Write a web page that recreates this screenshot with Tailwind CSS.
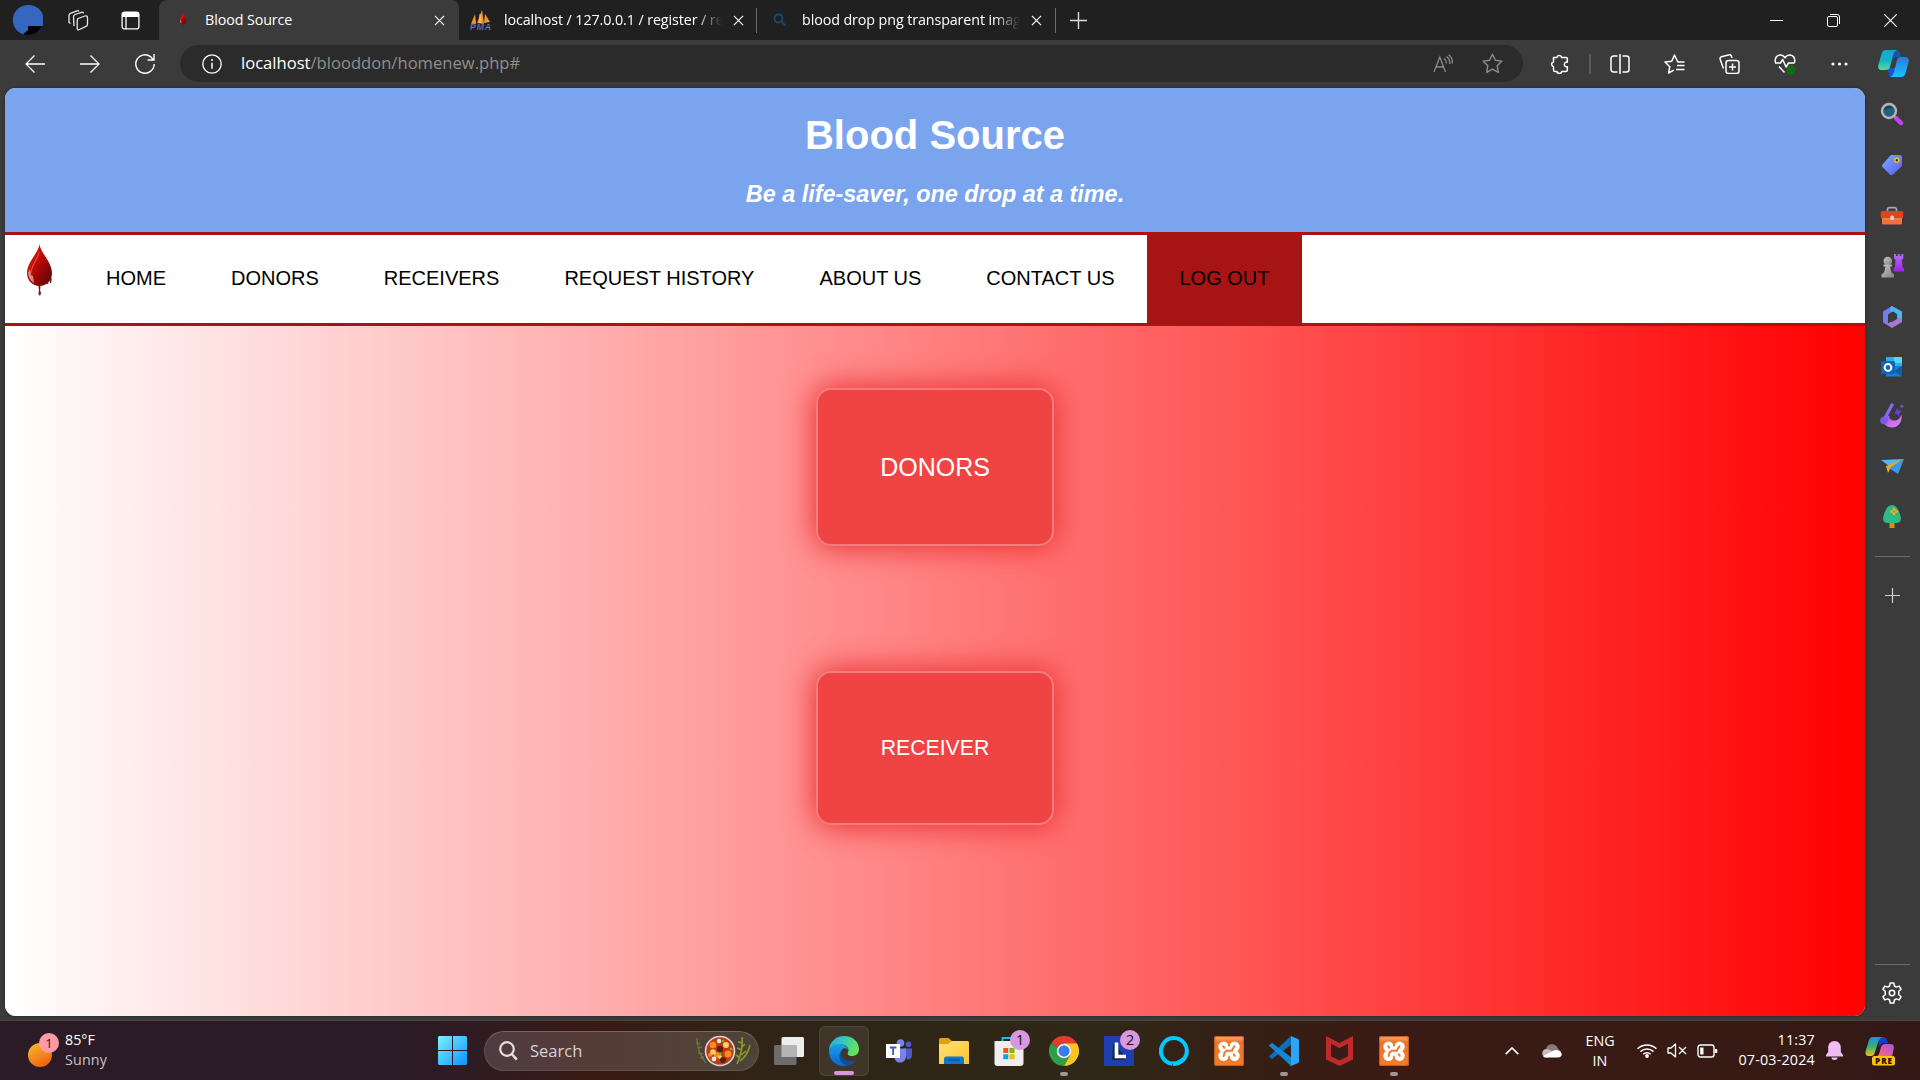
<!DOCTYPE html>
<html lang="en">
<head>
<meta charset="utf-8">
<title>Blood Source</title>
<script src="https://cdn.jsdelivr.net/npm/@tailwindcss/browser@4"></script>
</head>
<body class="w-[1920px] h-[1080px] overflow-hidden bg-[#3b3b3b] flex flex-col font-['Open_Sans',sans-serif] text-white">

<!-- Shared symbols -->
<svg class="absolute size-0">
  <defs>
    <linearGradient id="drop" x1="0" y1="0" x2="1" y2="1"><stop offset="0" stop-color="#f0280c"/><stop offset=".5" stop-color="#b00606"/><stop offset="1" stop-color="#4a0808"/></linearGradient>
    <linearGradient id="cpA" x1="0" y1="0" x2="0" y2="1"><stop offset="0" stop-color="#10a5e0"/><stop offset=".5" stop-color="#12b5c0"/><stop offset="1" stop-color="#5ad89a"/></linearGradient>
    <linearGradient id="cpB" x1="0" y1="0" x2="0" y2="1"><stop offset="0" stop-color="#2a78e0"/><stop offset="1" stop-color="#1cc0fa"/></linearGradient>
    <linearGradient id="win" x1="0" y1="0" x2="29" y2="29" gradientUnits="userSpaceOnUse"><stop offset="0" stop-color="#7df0ff"/><stop offset="1" stop-color="#0a94ff"/></linearGradient>
    <linearGradient id="sun" x1="0" y1="0" x2=".6" y2="1"><stop offset="0" stop-color="#f5c030"/><stop offset="1" stop-color="#f06410"/></linearGradient>
    <linearGradient id="tag" x1="0" y1="0" x2="1" y2="1"><stop offset="0" stop-color="#7fb0ff"/><stop offset="1" stop-color="#5558f0"/></linearGradient>
    <linearGradient id="purp" x1="0" y1="0" x2="0" y2="1"><stop offset="0" stop-color="#b070f0"/><stop offset="1" stop-color="#a020f0"/></linearGradient>
    <linearGradient id="pink" x1="0" y1="0" x2="1" y2="1"><stop offset="0" stop-color="#7a50e8"/><stop offset=".6" stop-color="#d070f0"/><stop offset="1" stop-color="#e080f0"/></linearGradient>
    <linearGradient id="gry" x1="0" y1="0" x2="1" y2="1"><stop offset="0" stop-color="#c8c8c8"/><stop offset="1" stop-color="#808080"/></linearGradient>
    <linearGradient id="fold" x1="0" y1="0" x2="1" y2="1"><stop offset="0" stop-color="#ffe07a"/><stop offset="1" stop-color="#fcc52c"/></linearGradient>
    <linearGradient id="edgeT" x1="0" y1="0" x2="1" y2=".3"><stop offset="0" stop-color="#2aa8dc"/><stop offset=".5" stop-color="#34c8c0"/><stop offset="1" stop-color="#62e35a"/></linearGradient>
    <linearGradient id="edgeB" x1="0" y1="0" x2="0" y2="1"><stop offset="0" stop-color="#1ba0e8"/><stop offset="1" stop-color="#0a66c8"/></linearGradient>
    <linearGradient id="pcA" x1="0" y1="0" x2="0" y2="1"><stop offset="0" stop-color="#1d8cf0"/><stop offset=".5" stop-color="#35b26e"/><stop offset="1" stop-color="#f0c020"/></linearGradient>
    <linearGradient id="pcB" x1="1" y1="0" x2="0" y2="1"><stop offset="0" stop-color="#9b58e8"/><stop offset=".5" stop-color="#e05aa8"/><stop offset="1" stop-color="#ff7a5a"/></linearGradient>
    <linearGradient id="xam" x1="0" y1="0" x2="0" y2="1"><stop offset="0" stop-color="#ffa868"/><stop offset=".12" stop-color="#f09058"/><stop offset=".2" stop-color="#e8762c"/><stop offset="1" stop-color="#f87c28"/></linearGradient>
    <symbol id="close" viewBox="0 0 12 12"><path d="M1 1l10 10M11 1L1 11" stroke="#fff" stroke-width="1.3" fill="none"/></symbol>
    <symbol id="blood" viewBox="0 0 26 52"><path d="M13 0c1 9 12.500 18 12.500 29 0 7.500-5.500 13-12.500 13S.5 36.500.5 29C.5 18 12 9 13 0z" fill="url(#drop)"/><path d="M12.500 8c-1 8-8 13-8 21" stroke="#ff6a50" stroke-width="1.200" fill="none" opacity=".6"/><path d="M1.500 29c1 6 3 8 6 10l-1-7-2-1-1-6z" fill="#e0b0a4" opacity=".8"/><path d="M24.500 34c0 2-.5 3-.5 5m-3-2v3" stroke="#7a1010" stroke-width="1.500" fill="none"/><path d="M12 42h2l-.5 5h-1z" fill="#701010"/><ellipse cx="13.200" cy="49" rx="1.200" ry="2.500" fill="#7c1818"/></symbol>
    <symbol id="xampp" viewBox="0 0 30 30"><rect width="30" height="30" rx="2.500" fill="url(#xam)"/><rect x=".6" y=".6" width="28.800" height="28.800" rx="2" fill="none" stroke="#c05c1c" stroke-width="1"/><g fill="#fff"><circle cx="9.500" cy="10.700" r="5.200"/><circle cx="20.500" cy="10.700" r="5.200"/><circle cx="9.500" cy="19.800" r="5.200"/><circle cx="20.500" cy="19.800" r="5.200"/><rect x="8" y="11" width="14" height="8.500"/></g><path d="M15 5.500v4.500M15 25v-4.500" stroke="#f07a2c" stroke-width="2"/><g fill="none" stroke="#f07a2c" stroke-width="2" stroke-linecap="round"><path d="M9.300 10.200l1 1.500M20.500 10.300l-2 3-.5 1.500h-5.500l-2 2-.8 3.200M20.700 19.800l-1-1.500"/></g></symbol>
  </defs>
</svg>

<!-- Tab strip -->
<div class="h-10 bg-[#202020] flex items-center shrink-0 text-[14.300px]">
  <div class="w-[50px] ml-[3px] flex justify-center">
    <svg width="30" height="30" viewBox="0 0 30 30"><circle cx="15" cy="15" r="15" fill="#000"/><path d="M15 0a15 15 0 0 1 14.500 21H15v4l-5 4.200A15 15 0 0 1 15 0z" fill="#3567c0"/></svg>
  </div>
  <div class="w-[50px] flex justify-center">
    <svg width="22" height="22" viewBox="0 0 22 22" fill="none" stroke="#e8e8e8" stroke-width="1.300" stroke-linejoin="round"><path d="M11 9.500l7-2.500c1.500-.5 2.500 0 2.500 1.500v6.500c0 1-.5 2-1.500 2.300l-6.500 3.200c-1.500.7-2.300 0-2.300-1.300v-7c0-1.200.2-2.200.8-2.700z"/><path d="M7 17l-.5-9c0-1 .5-2 1.500-2.500l6.500-2.200c1-.3 2 .2 2 1.200"/><path d="M3.500 14.500L2 13.500V6.500c0-1 .5-1.800 1.500-2.200l6.500-2.500c1-.3 1.800 0 2 .7"/></svg>
  </div>
  <div class="w-14 flex justify-center pr-0.5">
    <svg width="19" height="19" viewBox="0 0 19 19"><rect x="1.100" y="1.100" width="16.800" height="16.800" rx="2.500" fill="none" stroke="#fff" stroke-width="1.300"/><path d="M1 3.500A2.500 2.500 0 0 1 3.500 1h12A2.500 2.500 0 0 1 18 3.500V6H1z" fill="#fff"/><path d="M5 6v12" stroke="#fff" stroke-width="1.300"/></svg>
  </div>
  <div class="w-[300px] h-10 bg-[#3b3b3b] rounded-t-lg flex items-center pl-4 pr-[14px]">
    <svg width="16" height="14" class="mr-[14px]"><use href="#blood"/></svg>
    <span class="grow whitespace-nowrap tracking-[-0.1px]">Blood Source</span>
    <svg width="11" height="11"><use href="#close"/></svg>
  </div>
  <div class="w-[298px] flex items-center pl-[11px] border-r border-[#6a6a6a] h-[25px]">
    <svg width="22" height="21" viewBox="0 0 22 21" class="mr-3"><path d="M5 4L1 14h5zM12 0L7 13l7 1zM15 4l-1 9 6-1z" fill="#f0982c"/><path d="M10 4v9" stroke="#ffd090"/><text x="0" y="20" font-family="Liberation Sans" font-weight="bold" font-style="italic" font-size="8.500" textLength="21" fill="#8c94c8" stroke="#222a60" stroke-width=".4">PMA</text></svg>
    <span class="w-[218px] overflow-hidden whitespace-nowrap tracking-[-0.1px] [mask-image:linear-gradient(to_right,#000_88%,transparent)]">localhost / 127.0.0.1 / register / re</span>
    <svg width="11" height="11" class="ml-[11px]"><use href="#close"/></svg>
  </div>
  <div class="w-[299px] flex items-center pl-[16px] border-r border-[#6a6a6a] h-[25px]">
    <svg width="14" height="14" viewBox="0 0 14 14" class="mr-[15px]" fill="none" stroke="#1c4a72" stroke-width="1.800"><circle cx="5.500" cy="5.500" r="4"/><path d="M8.500 8.500l4 4.200"/></svg>
    <span class="w-[218px] overflow-hidden whitespace-nowrap tracking-[-0.1px] [mask-image:linear-gradient(to_right,#000_88%,transparent)]">blood drop png transparent imag</span>
    <svg width="11" height="11" class="ml-[11px]"><use href="#close"/></svg>
  </div>
  <div class="w-[45px] flex justify-center"><svg width="17" height="17" viewBox="0 0 17 17"><path d="M8.500 0v17M0 8.500h17" stroke="#ddd" stroke-width="1.400"/></svg></div>
  <div class="ml-auto mr-px flex">
    <div class="w-[57px] flex justify-center items-center"><svg width="13" height="13" viewBox="0 0 13 13"><path d="M0 6.500h13" stroke="#fff"/></svg></div>
    <div class="w-[57px] flex justify-center items-center"><svg width="13" height="13" viewBox="0 0 13 13" fill="none" stroke="#fff"><rect x=".5" y="2.500" width="10" height="10" rx="1.500"/><path d="M3 .5h7a2.500 2.500 0 0 1 2.500 2.500v7"/></svg></div>
    <div class="w-[57px] flex justify-center items-center"><svg width="13" height="13" viewBox="0 0 13 13"><path d="M.3 .3l12.400 12.400M12.700 .3L.3 12.700" stroke="#fff" stroke-width="1.100"/></svg></div>
  </div>
</div>

<!-- Address bar -->
<div class="h-12 flex items-center shrink-0 pl-[7px] pb-px">
  <div class="w-[55px] flex justify-center"><svg width="20" height="18" viewBox="0 0 20 18" fill="none" stroke="#fff" stroke-width="1.300"><path d="M20 9H1M9.500 .5L1 9l8.500 8.500"/></svg></div>
  <div class="w-[55px] flex justify-center"><svg width="20" height="18" viewBox="0 0 20 18" fill="none" stroke="#fff" stroke-width="1.300"><path d="M0 9h19M10.500 .5L19 9l-8.500 8.500"/></svg></div>
  <div class="w-[55px] flex justify-center"><svg width="20" height="20" viewBox="0 0 20 20" fill="none" stroke="#fff" stroke-width="1.400"><path d="M19.200 10A9.200 9.200 0 1 1 15.500 2.600L18 5.500M19 0v6h-6.500"/></svg></div>
  <div class="w-[1343px] h-[37px] ml-2 rounded-full bg-[#2b2b2b] flex items-center pl-[22px]">
    <svg width="20" height="20" viewBox="0 0 20 20" fill="none" stroke="#fff" stroke-width="1.300"><circle cx="10" cy="10" r="9.200"/><path d="M10 8.800v6" stroke-width="1.500"/><circle cx="10" cy="6" r="1" fill="#fff" stroke="none"/></svg>
    <span class="ml-[19px] text-[16.600px] whitespace-nowrap text-[#8f8f8f] grow"><span class="text-white">localhost</span>/blooddon/homenew.php#</span>
    <svg width="20" height="20" viewBox="0 0 20 20" fill="none" stroke="#8c8c8c" stroke-width="1.300"><path d="M1 18L6.800 3 12.500 18M3 13h7.600M11 4.500c1.800 1.200 2.500 2.800 2.400 5M13.500 2.500c2.600 1.800 3.600 4.200 3.200 7.500M15.500 .7c3 2 4.200 5 3.700 8.800"/></svg>
    <svg width="21" height="21" viewBox="0 0 21 21" class="ml-[29px] mr-5" fill="none" stroke="#8c8c8c" stroke-width="1.400" stroke-linejoin="round"><path d="M10.500 1.200l2.900 6 6.500.9-4.700 4.600 1.100 6.600-5.800-3.100-5.800 3.100 1.100-6.600L1.100 8.100l6.500-.9z"/></svg>
  </div>
  <div class="w-[55px] ml-[9px] flex justify-center pr-0.5"><svg width="20" height="20" viewBox="0 0 20 20" fill="none" stroke="#fff" stroke-width="1.500" stroke-linejoin="round"><path d="M4.500 3.500h3.300a2.500 2.500 0 0 1 4.900 0H17a1.300 1.300 0 0 1 1.300 1.300V8.200h-1.300a2.400 2.400 0 0 0 0 4.600h1.300V16a1.500 1.500 0 0 1-1.500 1.500h-4a2.500 2.500 0 0 1-4.900 0H6A1.500 1.500 0 0 1 4.500 16v-3.300a2.400 2.400 0 0 1 0-4.700z"/></svg></div>
  <div class="w-[2px] h-5 bg-[#5c5c5c] ml-[2px] mr-px"></div>
  <div class="w-[55px] flex justify-center"><svg width="20" height="20" viewBox="0 0 20 20" fill="none" stroke="#fff" stroke-width="1.500"><path d="M7.500 2H3.500A2.500 2.500 0 0 0 1 4.500v11A2.500 2.500 0 0 0 3.500 18h4M12.500 2h4A2.500 2.500 0 0 1 19 4.500v11a2.500 2.500 0 0 1-2.500 2.500h-4M10 0v20"/></svg></div>
  <div class="w-[55px] flex justify-center"><svg width="21" height="20" viewBox="0 0 21 20" fill="none" stroke="#fff" stroke-width="1.500" stroke-linejoin="round"><path d="M20.500 8h-6.700L10.500 1 7.700 7.200 1 8l4.800 4.700L4.600 19l5.300-2.800M13 11.500h7.500M12 15.500h8.500"/></svg></div>
  <div class="w-[55px] flex justify-center"><svg width="21" height="20" viewBox="0 0 21 20" fill="none" stroke="#fff" stroke-width="1.500" stroke-linejoin="round"><rect x="7" y="6.500" width="13" height="13" rx="2.500"/><path d="M13.500 9.500v7M10 13h7M4.500 14.500L1.200 5.500c-.4-1.200 0-2.300 1.200-2.800L9.500.9c1.300-.4 2.500.1 2.900 1.300l.6 1.800"/></svg></div>
  <div class="w-[55px] flex justify-center"><svg width="22" height="22" viewBox="0 0 22 22" fill="none" stroke="#fff" stroke-width="1.500" stroke-linejoin="round"><path d="M1.500 9.500C.5 5.500 2.500 2 6 2c2.200 0 3.800 1 5 2.800C12.200 3 13.800 2 16 2c3.500 0 5.500 3.500 4.500 7.500M1 10h5.500L8.700 6.500 12 14l2.500-4h6M5 13.500l5.500 6"/><circle cx="16.800" cy="17.200" r="4.600" fill="#0f700f" stroke="none"/><path d="M14.600 17.300l1.500 1.500 3-3" stroke="#2a4a2a" stroke-width="1"/></svg></div>
  <div class="w-[55px] flex justify-center"><svg width="17" height="4" viewBox="0 0 17 4" fill="#fff"><circle cx="2" cy="2" r="1.600"/><circle cx="8.500" cy="2" r="1.600"/><circle cx="15" cy="2" r="1.600"/></svg></div>
  <div class="w-[53px] flex justify-center"><svg width="31" height="27" viewBox="0 0 31 27"><path d="M16 0h2c3 0 4 2 5 7h-6l-4 6z" fill="#0d5aa8"/><path d="M9 18l3 9h4l2-9z" fill="#1a50d8"/><path d="M8 0h11c-3 1-4 4-5 9l-2 8c-.8 2-2 3-4 3H4c-3 0-4.500-2-3.600-5L3.500 4C4.200 1.500 5.500 0 8 0z" fill="url(#cpA)"/><path d="M22 7h5c3 0 4.500 2 3.600 5l-3 11c-.8 2.500-2 4-4.600 4H12c3-1 3.800-4 5-9l2-8c.6-2 1.500-3 3-3z" fill="url(#cpB)"/></svg></div>
</div>

<!-- Viewport and sidebar -->
<div class="flex h-[928px] shrink-0">
  <main class="w-[1860px] h-[928px] ml-[5px] rounded-[11px] overflow-hidden bg-white shadow-[0_0_3px_#222] font-['Liberation_Sans',Arial,sans-serif] flex flex-col">
    <header class="h-36 bg-[#7ba4ee] flex flex-col items-center pt-[24px] font-bold">
      <h1 class="text-[40px] leading-[46px]">Blood Source</h1>
      <h3 class="text-[23.400px] leading-[27px] mt-[23px] italic">Be a life-saver, one drop at a time.</h3>
    </header>
    <nav class="h-[94px] border-y-[3px] border-[#a61414] flex text-black text-[20px]">
      <svg width="27" height="52" class="ml-[21px] mt-[9px] mr-[20.500px]"><use href="#blood"/></svg>
      <a class="px-[32.500px] pt-[32px] leading-[23px]">HOME</a>
      <a class="px-[32.500px] pt-[32px] leading-[23px]">DONORS</a>
      <a class="px-[32.500px] pt-[32px] leading-[23px]">RECEIVERS</a>
      <a class="px-[32.500px] pt-[32px] leading-[23px]">REQUEST HISTORY</a>
      <a class="px-[32.500px] pt-[32px] leading-[23px]">ABOUT US</a>
      <a class="px-[32.500px] pt-[32px] leading-[23px]">CONTACT US</a>
      <a class="px-[32.500px] pt-[32px] leading-[23px] bg-[#a61414]">LOG OUT</a>
    </nav>
    <section class="grow bg-linear-to-r/srgb from-white to-[#ff0000] flex flex-col items-center pt-[62px]">
      <button class="w-[238px] h-[158px] rounded-[15px] bg-[#f04444] border-2 border-[#f47c7c] shadow-[0_0_30px_2px_#ea3030] text-[25px] leading-[28px]">DONORS</button>
      <button class="w-[238px] h-[154px] mt-[125px] rounded-[15px] bg-[#f04444] border-2 border-[#f47c7c] shadow-[0_0_30px_2px_#ea3030] text-[21.250px] leading-[24px]">RECEIVER</button>
    </section>
  </main>

  <aside class="w-[55px] flex flex-col items-center pr-px">
    <div class="h-[51px] flex items-center"><svg width="24" height="24" viewBox="0 0 24 24"><path d="M14.500 14.500l2.500 2.500" stroke="#aaa" stroke-width="2.500"/><path d="M16.500 16.500l4.500 4.500" stroke="#c840f0" stroke-width="4.500" stroke-linecap="round"/><circle cx="9" cy="9" r="7" fill="#256080" stroke="#b4b4b4" stroke-width="2.400"/><path d="M5 8a4.500 4.500 0 0 1 7-2" stroke="#1a3c50" stroke-width="2" fill="none"/></svg></div>
    <div class="h-[51px] flex items-center"><svg width="22" height="22" viewBox="0 0 22 22"><path d="M11 1h8a2 2 0 0 1 2 2v8c0 1-.3 1.500-1 2l-8 7.500c-1 .9-2 .9-3 0L1.500 13c-.8-.9-.8-1.600 0-2.500L9 2c.6-.7 1-1 2-1z" fill="url(#tag)"/><circle cx="15.800" cy="6.300" r="2" fill="#30343c" stroke="#f0c818" stroke-width="1.500"/></svg></div>
    <div class="h-[51px] flex items-center"><svg width="24" height="20" viewBox="0 0 24 20"><path d="M7.500 5V3.500A1.800 1.800 0 0 1 9.300 1.700h5.400a1.800 1.800 0 0 1 1.800 1.800V5" fill="none" stroke="#a8a8a8" stroke-width="1.700"/><path d="M2 10h20v7a1.500 1.500 0 0 1-1.500 1.500h-17A1.500 1.500 0 0 1 2 17z" fill="#f0713c"/><rect x=".7" y="5" width="22.600" height="7" rx="1.500" fill="#d8481c"/><path d="M2 13h20" stroke="#f88a5c"/><rect x="10.300" y="9.500" width="3.600" height="4.500" rx="1.500" fill="#c8dce0"/></svg></div>
    <div class="h-[49px] flex items-center"><svg width="24" height="24" viewBox="0 0 24 24"><path d="M14 0h2v2h1.700V0h2v2h1.600V0h2v4.500l-1.500 1.500.7 7 1.500 2v2.500H13.500V15l1.300-2 .8-7L14 4.500z" fill="url(#purp)"/><g fill="url(#gry)"><circle cx="7.800" cy="7" r="4.300"/><path d="M3.500 10.500h8.600v2h-2l1.300 6 2.600 2v3H1.500v-3l2.600-2 1.400-6h-2z"/></g></svg></div>
    <div class="h-[53px] flex items-center"><svg width="22" height="24" viewBox="0 0 22 24"><path d="M11 1L2 6.500v10.800l5 2.700V9.500l8-5z" fill="#6f7ff0"/><path d="M11 1l10 5.500V16l-5-3.500V10L9.500 6.200V2z" fill="#4ab8f0"/><path d="M2 17.300L11 23l10-6v-3l-4.500-1.500L7 18.500z" fill="#a878d8"/><path d="M8 9l4-2.400L16 9v5l-5 3-4-2.400z" fill="#383b3e"/></svg></div>
    <div class="h-[47px] flex items-center"><svg width="22" height="22" viewBox="0 0 22 22"><path d="M5 1h16v12H5z" fill="#28b4ea"/><path d="M13 1h8v6h-8z" fill="#50d8ff"/><path d="M5 10h16v10.500H5z" fill="#1482d0"/><path d="M21 10l-8 5.500 8 5z" fill="#0a60a8"/><rect y="5" width="14" height="13" rx="1.200" fill="#0f64b8"/><circle cx="7" cy="11.500" r="3.400" fill="none" stroke="#fff" stroke-width="2"/></svg></div>
    <div class="h-[51px] flex items-center"><svg width="24" height="25" viewBox="0 0 24 25"><path d="M3 15c-1 6 4 9.500 9 9.500 6.500 0 10.500-5.500 9.500-13-2 5-4.500 6.500-8 6-3.500-.5-4.500-2.500-4-5z" fill="url(#pink)"/><path d="M12 2L5 15" stroke="#8a68f0" stroke-width="3.200" stroke-linecap="round"/><circle cx="4" cy="17.500" r="3.800" fill="#8058e8"/><path d="M17 5l1.500 2.500L22 8l-2.500 2-.5 3.500-2-2.500-3-.5L16 8z" fill="#7038e8"/><path d="M22 1l.6 1.600 1.400.6-1.500.8-.5 1.600-.8-1.600-1.400-.6 1.500-.8z" fill="#8a50f0"/></svg></div>
    <div class="h-[49px] flex items-center"><svg width="23" height="16" viewBox="0 0 23 16"><path d="M0 2L23 1 8 8z" fill="#50b8f0"/><path d="M23 1L5 8l2 7 2.500-5z" fill="#f0a818"/><path d="M23 1L8.500 10.500 17 16z" fill="#3898f0"/></svg></div>
    <div class="h-[53px] flex items-center"><svg width="20" height="23" viewBox="0 0 20 23"><rect x="7.500" y="16" width="5" height="7" fill="#e08a10"/><path d="M10 0c4 0 6 4 7.500 8 1.500 3.500 3 10-2.500 10H5C-.5 18 1 11.500 2.500 8 4 4 6 0 10 0z" fill="#30b888"/><path d="M12 4v5M9.500 6.500h5" stroke="#f0b020" stroke-width="2.600" stroke-linecap="round"/><circle cx="12" cy="6.500" r="1" fill="#d07008"/></svg></div>
    <div class="w-[35px] h-px bg-[#6c6c6c] mt-[13px]"></div>
    <svg width="15" height="15" viewBox="0 0 15 15" class="mt-[31px] shrink-0"><path d="M7.500 0v15M0 7.500h15" stroke="#d0d0d0" stroke-width="1.200"/></svg>
    <div class="w-[35px] h-px bg-[#6c6c6c] mt-auto"></div>
    <svg width="22" height="22" viewBox="0 0 22 22" class="mt-[17px] mb-[12px] shrink-0" fill="none" stroke="#fff" stroke-width="1.500" stroke-linejoin="round"><circle cx="11" cy="11" r="2.700"/><path d="M9.200 1h3.600l.6 3 1.900 1.100 2.900-1 1.900 3.200-2.300 2v3.400l2.300 2-1.900 3.200-2.900-1-1.900 1.100-.6 3H9.200l-.6-3-1.900-1.100-2.900 1-1.900-3.200 2.300-2V9.300l-2.300-2 1.900-3.200 2.900 1L8.600 4z"/></svg>
  </aside>
</div>
<div class="h-1 shrink-0"></div>

<!-- Taskbar -->
<footer class="h-[60px] shrink-0 border-t border-[#4a4340] bg-[linear-gradient(90deg,#2a1b27_0%,#2a1b26_20%,#301b22_25%,#391b14_31%,#2f2417_40%,#2f2717_58%,#352016_64%,#3a1a14_72%,#381a14_90%,#331816_100%)] flex items-center text-[14.300px] leading-5">
  <div class="relative w-[31px] h-[35px] ml-[28px] -mt-px">
    <svg width="24" height="24" class="mt-[10px]"><circle cx="12" cy="12" r="12" fill="url(#sun)"/></svg>
    <span class="absolute left-[11px] top-0 size-5 rounded-full bg-[#ff9aa5] text-[#301418] text-[13px] leading-5 text-center">1</span>
  </div>
  <div class="ml-[5px] w-[374px] -mt-px pl-px"><div>85°F</div><div class="text-[#c8c0c6] tracking-[0.15px]">Sunny</div></div>
  <svg width="29" height="29" viewBox="0 0 29 29" fill="url(#win)"><path d="M1 0h13v14H0V1zM15 0h13l1 1v13H15zM0 15h14v14H1l-1-1zM15 15h14v13l-1 1H15z"/></svg>
  <div class="w-[275px] h-10 ml-[17px] rounded-full border border-white/10 border-t-white/20 bg-white/15 flex items-center pl-[14px] pr-[7px]">
    <svg width="19" height="20" viewBox="0 0 19 20" fill="none" stroke="#e4e0e0" stroke-width="2.200"><circle cx="8" cy="8" r="6.800"/><path d="M12.800 13l5 5.600" stroke-width="2.600"/></svg>
    <span class="ml-[12px] text-[16.500px] text-[#d8d2d2] grow">Search</span>
    <svg width="56" height="32" viewBox="0 0 56 32"><g fill="none" stroke="#6a7440" stroke-width="1.400"><path d="M2 3c0 9 3 18 9 25M1 8l4 1M3 13l4-1M3 18l5 1M5 23l4-1"/></g><g fill="none" stroke="#8a9a28" stroke-width="1.600"><path d="M47 2c1 9-1 18-5 27M43 7l5 1M50 9l-3 3M42 13l5 2M51 16l-5 4M55 10c-2 9-6 13-10 16M41 20l4 3"/></g><circle cx="25" cy="16" r="14.500" fill="#c03c10" stroke="#d8d8dc" stroke-width="1.600"/><g fill="#f88a20"><circle cx="18" cy="10" r="3.300"/><circle cx="33" cy="19" r="3.500"/><circle cx="22" cy="20" r="3"/><circle cx="15" cy="20" r="2"/></g><g fill="#f8d070"><circle cx="31" cy="10" r="3"/><circle cx="18" cy="17" r="2.800"/><circle cx="25" cy="22" r="2"/></g><g fill="#5a200c"><circle cx="25" cy="14" r="3.200"/><circle cx="28" cy="25" r="3"/></g><g fill="#f0e8e0"><circle cx="24" cy="6" r="2.200"/><circle cx="19" cy="24" r="2.400"/></g><g fill="#80b020"><circle cx="28" cy="6" r="1.300"/><circle cx="25" cy="19" r="1.500"/><circle cx="36" cy="14" r="1.300"/></g></svg>
  </div>
  <div class="ml-[5px] flex">
    <div class="w-[50px] h-[50px] flex items-center justify-center"><svg width="30" height="28" viewBox="0 0 30 28"><rect x="7.500" width="22.500" height="20" rx="1.500" fill="#ededed"/><rect y="8" width="22.500" height="20" rx="1.500" fill="#6c6c6c"/><path d="M7.500 8h15v12h-15z" fill="#b4b4b4"/></svg></div>
    <div class="relative w-[50px] h-[50px] ml-[5px] rounded-md bg-white/8 border border-white/8 flex items-center justify-center"><svg width="30" height="30" viewBox="0 0 30 30"><path d="M0 15C0 6 7 0 15 0c9 0 15 6 15 13 0 5-3.500 7-7 7s-4.500-1.500-4.500-2.500c0-.8 1-1.500 1-3.500 0-3-3-5.500-7.500-5.500C6 8.500 1 11.500 0 15z" fill="url(#edgeT)"/><path d="M0 15c1-4.500 5-7 10-7 4.500 0 9 2.500 9 6-1-1.500-3-2-4.500-1.500C12 14 11.500 16 11.500 18c0 5 4 9.500 8 11C16 30.500 12 30.200 9 29 4 27 0 22 0 15z" fill="url(#edgeB)"/><path d="M12.500 15.500c-1.500 5 2.500 9.500 9 9.500 2.500 0 4.500-.8 6-1.800C25.500 27 21 29.500 18 29.700c-6-1.500-10.500-9.200-5.500-14.200z" fill="#124e9c"/></svg><span class="absolute bottom-0 left-[14px] w-5 h-1 rounded-full bg-[#d898e0]"></span></div>
    <div class="w-[50px] h-[50px] ml-[5px] flex items-center justify-center"><svg width="26" height="24" viewBox="0 0 26 24"><circle cx="14.500" cy="4" r="3.800" fill="#7b83eb"/><circle cx="22.500" cy="5.300" r="2.800" fill="#5059c9"/><path d="M18 9.500h8V16c0 3-2 5-5 4.500z" fill="#5059c9"/><path d="M9 9.500h11V17c0 4-2.500 6.500-6 6.500s-5-2-5.500-5z" fill="#7b83eb"/><rect y="5" width="14" height="14" fill="#fff"/><path d="M3.800 8.500h6.600M7.100 8.500V16" stroke="#4b53bc" stroke-width="1.800"/></svg></div>
    <div class="w-[50px] h-[50px] ml-[5px] flex items-center justify-center"><svg width="30" height="26" viewBox="0 0 30 26"><path d="M0 1.500A1.500 1.500 0 0 1 1.500 0h8l3.500 3H28v5H0z" fill="#e0a010"/><path d="M0 6h9l4-3h15.500A1.500 1.500 0 0 1 30 4.500V26H0z" fill="url(#fold)"/><path d="M5 26v-5a2.500 2.500 0 0 1 2.500-2.500h15A2.500 2.500 0 0 1 25 21v5z" fill="#0c78cc"/><path d="M9 22h12" stroke="#0a4c90" stroke-width="1.200"/></svg></div>
    <div class="relative w-[50px] h-[50px] ml-[5px] flex items-center justify-center"><svg width="30" height="30" viewBox="0 0 30 30"><path d="M8.500 6V2h13v4" fill="none" stroke="#28b8e8" stroke-width="1.800"/><path d="M.5 5h29v22a3 3 0 0 1-3 3h-23a3 3 0 0 1-3-3z" fill="#eee"/><path d="M9.300 12h5v5h-5z" fill="#f25022"/><path d="M15.500 12h5v5h-5z" fill="#7fba00"/><path d="M9.300 18.200h5v5h-5z" fill="#00a4ef"/><path d="M15.500 18.200h5v5h-5z" fill="#ffb900"/></svg><span class="absolute left-[26px] top-[4px] size-5 rounded-full bg-[#d898e0] text-[#201020] text-center leading-5">1</span></div>
    <div class="relative w-[50px] h-[50px] ml-[5px] flex items-center justify-center"><svg width="30" height="30" viewBox="0 0 30 30"><path d="M15 15L2 7.500A15 15 0 0 1 28 7.500z" fill="#e33b2e"/><path d="M2 7.500A15 15 0 0 0 15 30l6.500-11.500L15 15z" fill="#2f9e4a"/><path d="M28 7.500H15l6.500 11L15 30A15 15 0 0 0 28 7.500z" fill="#fcc41c"/><circle cx="15" cy="15" r="7.200" fill="#fff"/><circle cx="15" cy="15" r="5.700" fill="#3a7cf0"/></svg><span class="absolute bottom-0 left-[21px] w-2 h-1 rounded-full bg-[#a09890]"></span></div>
    <div class="relative w-[50px] h-[50px] ml-[5px] flex items-center justify-center"><svg width="30" height="30" viewBox="0 0 30 30"><path d="M0 0h30v30H0z" fill="#1e3fb0"/><path d="M9 7l-1 17h13v-4z" fill="#142c50"/><path d="M12.500 6.500v14h9.500" fill="none" stroke="#fff" stroke-width="3.600"/></svg><span class="absolute left-[26px] top-[4px] size-5 rounded-full bg-[#d898e0] text-[#201020] text-center leading-5">2</span></div>
    <div class="w-[50px] h-[50px] ml-[5px] flex items-center justify-center"><svg width="30" height="30" viewBox="0 0 30 30"><path d="M13.500 27.800A12.900 12.900 0 1 1 17.500 27.600" fill="none" stroke="#00caff" stroke-width="4"/><path d="M12.800 25.500c.8 1.200 1.200 2.800 1.200 4.500 4 0 8-1.500 11-5l-1.500-4c-2.500 3-6.500 5-10.700 4.500z" fill="#00caff"/></svg></div>
    <div class="w-[50px] h-[50px] ml-[5px] flex items-center justify-center"><svg width="30" height="30"><use href="#xampp"/></svg></div>
    <div class="relative w-[50px] h-[50px] ml-[5px] flex items-center justify-center"><svg width="30" height="30" viewBox="0 0 30 30"><path d="M22.500 8.500L3 23 .6 21.300a1 1 0 0 1 0-1.500L22 0z" fill="#0a70b8"/><path d="M22.500 21.500L3 7 .6 8.700a1 1 0 0 0 0 1.500L22 30z" fill="#1488d8"/><path d="M22 0l7 3a1.500 1.500 0 0 1 1 1.500v21a1.500 1.500 0 0 1-1 1.500l-7 3z" fill="#30a4f4"/></svg><span class="absolute bottom-0 left-[21px] w-2 h-1 rounded-full bg-[#a09890]"></span></div>
    <div class="w-[50px] h-[50px] ml-[5px] flex items-center justify-center"><svg width="27" height="30" viewBox="0 0 27 30"><path d="M0 0l13.500 7L27 0v23.500L13.500 30 0 23.500zM5 7.500v12.800l8.500 4.200 8.500-4.200V7.500l-8.500 4.800z" fill="#c02a2c" fill-rule="evenodd"/></svg></div>
    <div class="relative w-[50px] h-[50px] ml-[5px] flex items-center justify-center"><svg width="30" height="30"><use href="#xampp"/></svg><span class="absolute bottom-0 left-[21px] w-2 h-1 rounded-full bg-[#a09890]"></span></div>
  </div>
  <svg width="14" height="8" viewBox="0 0 14 8" class="ml-[86px]" fill="none" stroke="#fff" stroke-width="1.700"><path d="M.7 7.200L7 1l6.300 6.200"/></svg>
  <svg width="20" height="14" viewBox="0 0 20 14" class="ml-[23px]"><path d="M4 5.500A6 6 0 0 1 15.500 4L19 8H3z" fill="#8c7a76"/><path d="M4.500 13.500a4.300 4.300 0 0 1 0-8.600c2.500 0 4 1 6 2.600l4 3z" fill="#c8bcb8"/><path d="M1 12l9-4.500c3-1.800 5-1.700 7-.7 4 2 3.500 6.700-1 6.700H4.500C3 13.500 2 13 1 12z" fill="#fff"/></svg>
  <div class="w-10 ml-[18px] text-center text-[14.300px]"><div>ENG</div><div>IN</div></div>
  <svg width="20" height="15" viewBox="0 0 20 15" class="ml-[17px]" fill="none" stroke="#fff" stroke-width="1.500"><path d="M.6 5.800a13.300 13.300 0 0 1 18.800 0M3.500 8.600a9.200 9.200 0 0 1 13 0M6.300 11.200a5.300 5.300 0 0 1 7.400 0"/><circle cx="10" cy="13" r="1.900" fill="#fff" stroke="none"/></svg>
  <svg width="20" height="15" viewBox="0 0 20 15" class="ml-[10px]" fill="none" stroke="#fff" stroke-width="1.300" stroke-linejoin="round"><path d="M1 5h3l4.500-4v13L4 10H1zM12 4l7 7M19 4l-7 7"/></svg>
  <svg width="21" height="14" viewBox="0 0 21 14" class="ml-[10px]" fill="none" stroke="#fff" stroke-width="1.400"><rect x="1" y="1" width="16" height="12" rx="2.500"/><path d="M19 5v4" stroke-width="2.500"/><path d="M3.200 3.500h3.300v7H3.200z" fill="#fff" stroke="none"/></svg>
  <div class="w-[97px] text-right tracking-[0.2px] -mt-px"><div>11:37</div><div>07-03-2024</div></div>
  <svg width="17" height="19" viewBox="0 0 17 19" class="ml-[11px]" fill="#f0bcf4"><path d="M8.500 0c4 0 6.300 3 6.300 6.500V11L17 14v1.500H0V14l2.200-3V6.500C2.200 3 4.500 0 8.500 0zM5.500 16.500h6a3 2.500 0 0 1-6 0z"/></svg>
  <svg width="30" height="30" viewBox="0 0 30 30" class="ml-[22px]"><path d="M14 1h4c3 0 4 2 5 6h-6l-3 4z" fill="#1040c8"/><path d="M8 1h9c-3 2-4 5-5 9l-2 6c-.8 3-2 4-4 4H4c-3 0-4-2-3.300-5L4 4c.8-2 2-3 4-3z" fill="url(#pcA)"/><path d="M20 8h5c3.500 0 4.500 2 3.600 5L27 21H10c3-1 4-2 5-6l1-4c.8-2 2-3 4-3z" fill="url(#pcB)"/><rect x="7" y="20" width="23" height="9.500" rx="2.500" fill="#ffc20e"/><text x="10" y="27.600" font-family="Open Sans" font-weight="800" font-size="8" textLength="17" fill="#201000">PRE</text></svg>
</footer>
</body>
</html>
